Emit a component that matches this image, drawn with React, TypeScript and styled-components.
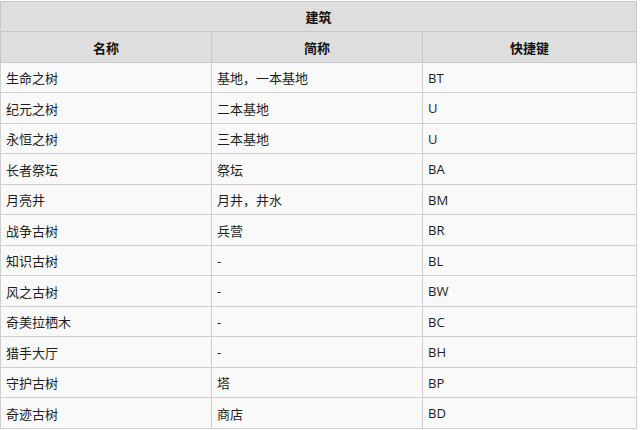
import React from 'react'
import styled, { createGlobalStyle } from 'styled-components'

const ROW_HEIGHT = 30.5

const rows = [
  ['生命之树', '基地，一本基地', 'BT'],
  ['纪元之树', '二本基地', 'U'],
  ['永恒之树', '三本基地', 'U'],
  ['长者祭坛', '祭坛', 'BA'],
  ['月亮井', '月井，井水', 'BM'],
  ['战争古树', '兵营', 'BR'],
  ['知识古树', '-', 'BL'],
  ['风之古树', '-', 'BW'],
  ['奇美拉栖木', '-', 'BC'],
  ['猎手大厅', '-', 'BH'],
  ['守护古树', '塔', 'BP'],
  ['奇迹古树', '商店', 'BD'],
]

// whole pixels per row, so the lines fall where the 30.5px grid puts them
const rowHeight = (i: number) =>
  Math.round((i + 1) * ROW_HEIGHT - 0.01) - Math.round(i * ROW_HEIGHT - 0.01)

const GlobalStyle = createGlobalStyle`
  html, body {
    margin: 0;
    padding: 0;
    background: #ffffff;
  }
  body {
    font-family: 'Open Sans', 'Noto Sans CJK SC', sans-serif;
    color: #1e1e1e;
  }
`

const Table = styled.table`
  width: 637px;
  margin-top: 1px;
  border-collapse: collapse;
  table-layout: fixed;
  font-size: 13px;
  background: #f9f9f9;
  border: 1px solid #c8c8c8;
`

const HeadRow = styled.tr`
  background: #dedede;
`

const Th = styled.th<{ $h: number }>`
  height: ${({ $h }) => $h}px;
  padding: 0 5px;
  border: 1px solid #c8c8c8;
  font-weight: bold;
  text-align: center;
  color: #111;
  box-sizing: border-box;
`

const Td = styled.td<{ $h: number }>`
  height: ${({ $h }) => $h}px;
  padding: 0 5px;
  border: 1px solid #cfcfcf;
  text-align: left;
  white-space: nowrap;
  box-sizing: border-box;
`

export default function App() {
  return (
    <>
      <GlobalStyle />
      <Table>
        <colgroup>
          <col style={{ width: 211 }} />
          <col style={{ width: 211 }} />
          <col />
        </colgroup>
        <thead>
          <HeadRow>
            <Th $h={30} colSpan={3}>建筑</Th>
          </HeadRow>
          <HeadRow>
            <Th $h={31}>名称</Th>
            <Th $h={31}>简称</Th>
            <Th $h={31}>快捷键</Th>
          </HeadRow>
        </thead>
        <tbody>
          {rows.map(([name, short, key], i) => (
            <tr key={name}>
              <Td $h={rowHeight(i)}>{name}</Td>
              <Td $h={rowHeight(i)}>{short}</Td>
              <Td $h={rowHeight(i)}>{key}</Td>
            </tr>
          ))}
        </tbody>
      </Table>
    </>
  )
}
